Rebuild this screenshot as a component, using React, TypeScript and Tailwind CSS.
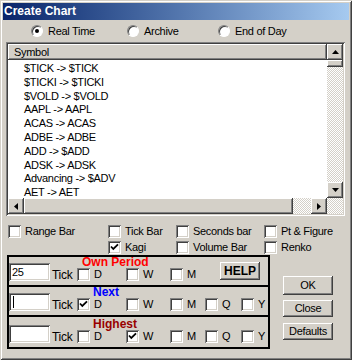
import type { ReactNode } from "react";

const raised =
  "bg-[#d4d0c8] shadow-[inset_-1px_-1px_#404040,inset_1px_1px_#ffffff,inset_-2px_-2px_#808080,inset_2px_2px_#d4d0c8]";
const sunken =
  "bg-white shadow-[inset_1px_1px_#808080,inset_-1px_-1px_#ffffff,inset_2px_2px_#404040,inset_-2px_-2px_#d4d0c8]";
const dither =
  "bg-[repeating-conic-gradient(#d4d0c8_0_25%,#ffffff_0_50%)] bg-[length:2px_2px]";

const symbols = [
  "$TICK -> $TICK",
  "$TICKI -> $TICKI",
  "$VOLD -> $VOLD",
  "AAPL -> AAPL",
  "ACAS -> ACAS",
  "ADBE -> ADBE",
  "ADD -> $ADD",
  "ADSK -> ADSK",
  "Advancing -> $ADV",
  "AET -> AET",
];

function Arrow({ dir }: { dir: "up" | "down" | "left" | "right" }) {
  const points = {
    up: "3.5,1 0,5 7,5",
    down: "0,1 7,1 3.5,5",
    left: "5,0 5,7 1,3.5",
    right: "1,0 1,7 5,3.5",
  }[dir];
  const vertical = dir === "up" || dir === "down";
  return (
    <div className={`flex h-[16px] w-[16px] items-center justify-center ${raised}`}>
      <svg width={vertical ? 7 : 6} height={vertical ? 6 : 7} className="block">
        <polygon points={points} fill="#000" />
      </svg>
    </div>
  );
}

function Check({ checked = false }: { checked?: boolean }) {
  return (
    <div className={`h-[13px] w-[13px] shrink-0 ${sunken}`}>
      {checked ? (
        <svg width="13" height="13" className="block">
          <path d="M3 5.5 L5.3 8 L10 3.3" stroke="#000" strokeWidth="1.8" fill="none" />
        </svg>
      ) : null}
    </div>
  );
}

function CheckItem({
  label,
  checked,
  width,
}: {
  label: string;
  checked?: boolean;
  width: string;
}) {
  return (
    <div className={`flex items-center ${width}`}>
      <Check checked={checked} />
      <span className="ml-[4px] whitespace-nowrap leading-[13px]">{label}</span>
    </div>
  );
}

function Radio({ label, on, width }: { label: string; on?: boolean; width: string }) {
  return (
    <div className={`flex items-center ${width}`}>
      <div className="flex h-[12px] w-[12px] items-center justify-center rounded-full border border-t-[#808080] border-l-[#808080] border-r-white border-b-white bg-white shadow-[inset_1px_1px_#404040]">
        {on ? <div className="h-[4px] w-[4px] rounded-full bg-black" /> : null}
      </div>
      <span className="ml-[5px] whitespace-nowrap">{label}</span>
    </div>
  );
}

function PeriodBox({
  value,
  caret,
  label,
  labelClass,
  children,
  extra,
  last,
}: {
  value?: string;
  caret?: boolean;
  label: string;
  labelClass: string;
  children: ReactNode;
  extra?: ReactNode;
  last?: boolean;
}) {
  return (
    <div
      className={`flex h-[30px] items-end pb-[4px] ${last ? "" : "border-b-2 border-black"}`}
    >
      <div className={`flex h-[18px] w-[41px] items-center pl-[3px] ${sunken}`}>
        {value}
        {caret ? <div className="ml-[1px] h-[12px] w-px bg-black" /> : null}
      </div>
      <span className="w-[27px] pl-[2px] text-[12px] leading-[11px]">Tick</span>
      <div className="flex flex-col">
        <div className={`text-[12px] font-bold leading-[12px] tracking-normal ${labelClass}`}>
          {label}
        </div>
        <div className="flex items-end">{children}</div>
      </div>
      {extra}
    </div>
  );
}

export default function App() {
  return (
    <div className="h-[360px] w-[352px] overflow-hidden bg-[#d4d0c8] p-[3px] font-['Liberation_Sans',Arial,sans-serif] text-[11px] tracking-[-0.3px] text-black shadow-[inset_1px_1px_#d4d0c8,inset_-1px_-1px_#404040,inset_2px_2px_#ffffff,inset_-2px_-2px_#808080]">
      <div className="h-[17px] bg-linear-to-r from-[#0a246a] to-[#a6caf0] pl-[1px] text-[12px] font-bold leading-[17px] tracking-normal text-white">
        Create Chart
      </div>

      <div className="flex h-[22px] items-center pl-[28px]">
        <Radio label="Real Time" on width="w-[96px]" />
        <Radio label="Archive" width="w-[91px]" />
        <Radio label="End of Day" width="w-[100px]" />
      </div>

      <div className={`ml-[3px] flex h-[174px] w-[339px] p-[2px] ${sunken}`}>
        <div className="flex w-[319px] flex-col">
          <div className={`h-[16px] pl-[6px] leading-[16px] ${raised}`}>Symbol</div>
          <div className="flex-1 overflow-hidden bg-white pl-[16px] pt-[1px]">
            {symbols.map((s) => (
              <div key={s} className="h-[13.8px] whitespace-nowrap leading-[12px] pt-[1px]">
                {s}
              </div>
            ))}
          </div>
          <div className="flex h-[16px]">
            <Arrow dir="left" />
            <div className={`h-[16px] w-[269px] ${raised}`} />
            <div className={`h-[16px] flex-1 ${dither}`} />
            <Arrow dir="right" />
          </div>
        </div>
        <div className="flex w-[16px] flex-col">
          <Arrow dir="up" />
          <div className={`h-[7px] w-[16px] ${raised}`} />
          <div className={`flex-1 ${dither}`} />
          <Arrow dir="down" />
          <div className={`h-[16px] ${dither}`} />
        </div>
      </div>

      <div className="mt-[9px] flex pl-[5px]">
        <CheckItem label="Range Bar" width="w-[100px]" />
        <CheckItem label="Tick Bar" width="w-[68px]" />
        <CheckItem label="Seconds bar" width="w-[88px]" />
        <CheckItem label="Pt & Figure" width="w-[80px]" />
      </div>
      <div className="mt-[3px] flex pl-[105px]">
        <CheckItem label="Kagi" checked width="w-[68px]" />
        <CheckItem label="Volume Bar" width="w-[88px]" />
        <CheckItem label="Renko" width="w-[80px]" />
      </div>

      <div className="mt-[1px] flex">
        <div className="ml-[4px] w-[263px] border-2 border-black">
          <PeriodBox
            value="25"
            label="Own Period"
            labelClass="ml-[5px] text-[#ff0000]"
            extra={
              <button
                className={`mb-[1px] h-[18px] w-[40px] text-[12px] font-bold tracking-normal ${raised}`}
              >
                HELP
              </button>
            }
          >
            <CheckItem label="D" width="w-[49px]" />
            <CheckItem label="W" width="w-[44px]" />
            <CheckItem label="M" width="w-[50px]" />
          </PeriodBox>
          <PeriodBox caret label="Next" labelClass="ml-[16px] text-[#0000ff]">
            <CheckItem label="D" checked width="w-[49px]" />
            <CheckItem label="W" width="w-[44px]" />
            <CheckItem label="M" width="w-[35px]" />
            <CheckItem label="Q" width="w-[36px]" />
            <CheckItem label="Y" width="w-[20px]" />
          </PeriodBox>
          <PeriodBox label="Highest" labelClass="ml-[16px] text-[#990000]" last>
            <CheckItem label="D" width="w-[49px]" />
            <CheckItem label="W" checked width="w-[44px]" />
            <CheckItem label="M" width="w-[35px]" />
            <CheckItem label="Q" width="w-[36px]" />
            <CheckItem label="Y" width="w-[20px]" />
          </PeriodBox>
        </div>

        <div className="ml-[13px] flex w-[50px] flex-col pt-[21px]">
          <button className={`h-[19px] ${raised}`}>OK</button>
          <button className={`mt-[5px] h-[17px] ${raised}`}>Close</button>
          <button className={`mt-[6px] h-[17px] ${raised}`}>Defaults</button>
        </div>
      </div>
    </div>
  );
}
